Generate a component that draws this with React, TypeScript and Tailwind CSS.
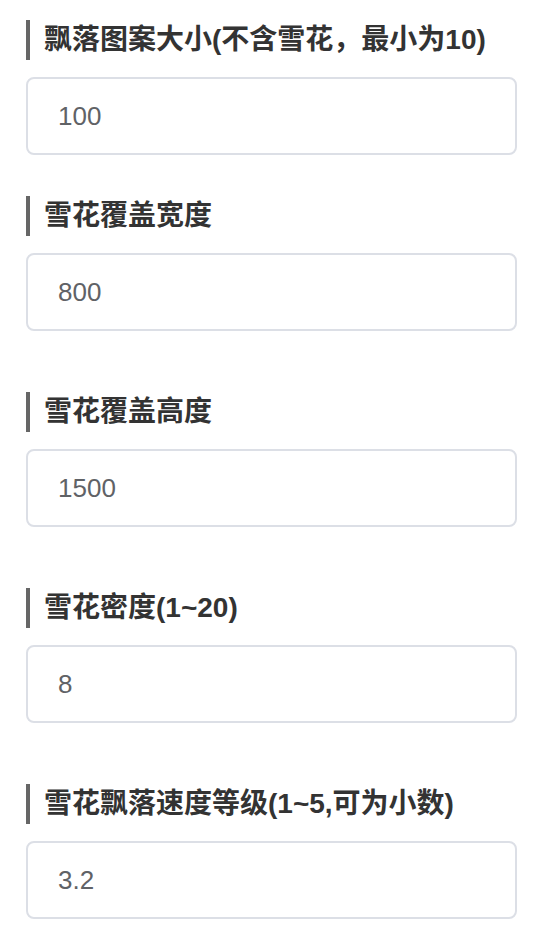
const fields = [
  { label: "飘落图案大小(不含雪花，最小为10)", value: "100" },
  { label: "雪花覆盖宽度", value: "800" },
  { label: "雪花覆盖高度", value: "1500" },
  { label: "雪花密度(1~20)", value: "8" },
  { label: "雪花飘落速度等级(1~5,可为小数)", value: "3.2" },
];

export default function App() {
  return (
    <div
      className="min-h-[936px] w-[538px] bg-white pl-[26px] pt-[20px]"
      style={{ fontFamily: '"Liberation Sans", "Noto Sans CJK SC", sans-serif' }}
    >
      {fields.map((f, i) => (
        <div key={f.label} className={i === 0 ? "mb-[41px]" : "mb-[61px]"}>
          <div className="flex h-[40px] items-center border-l-4 border-[#666666] pl-[14px] text-[28px] font-bold leading-[40px] text-[#333333]">
            {f.label}
          </div>
          <input
            type="text"
            defaultValue={f.value}
            className="mt-[17px] block h-[78px] w-[491px] rounded-[8px] border-2 border-[#dcdfe6] bg-white px-[30px] text-[26px] text-[#606266] outline-none"
          />
        </div>
      ))}
    </div>
  );
}
